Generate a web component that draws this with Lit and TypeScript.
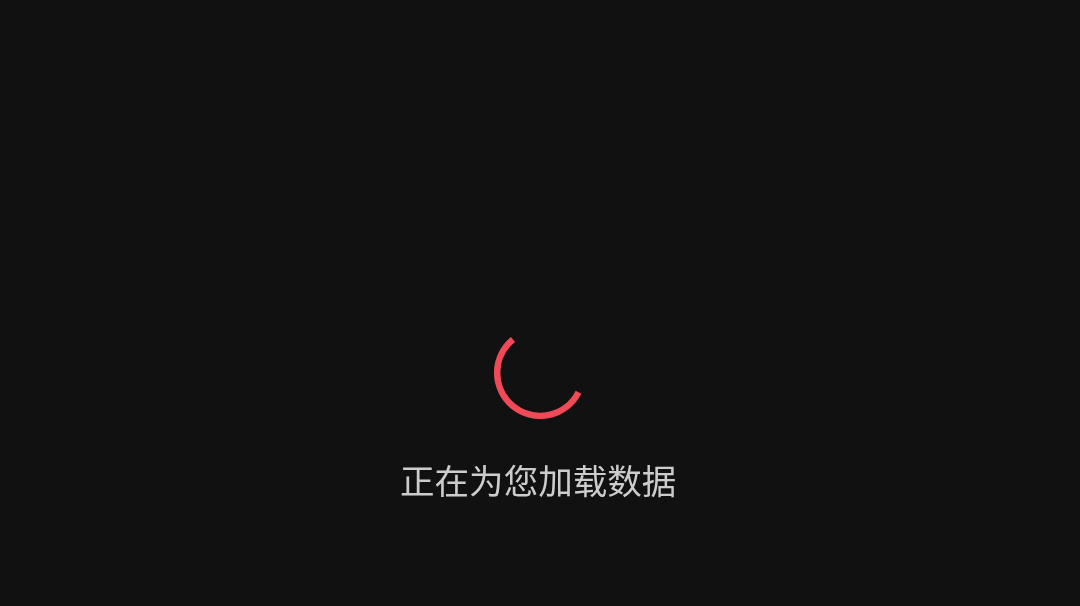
import { LitElement, html, css } from "lit";
import { customElement } from "lit/decorators.js";

@customElement("app-root")
export class AppRoot extends LitElement {
  static styles = css`
    :host { display: block; height: 606px; background: #111112; }
    .wrap { height: 100%; display: flex; flex-direction: column; align-items: center; box-sizing: border-box; padding-top: 327px; }
    svg { display: block; width: 92px; height: 92px; }
    .t { margin: 38px 3px 0 0; font: 34.56px/44px "Noto Sans CJK SC", sans-serif; color: #cccccc; will-change: transform; }
  `;
  render() {
    return html`<div class="wrap">
      <svg viewBox="0 0 92 92"><path d="M19 12.4 A43 43 0 1 0 84.5 65.2" fill="none" stroke="#f04a58" stroke-width="6.4"/></svg>
      <div class="t">正在为您加载数据</div>
    </div>`;
  }
}
